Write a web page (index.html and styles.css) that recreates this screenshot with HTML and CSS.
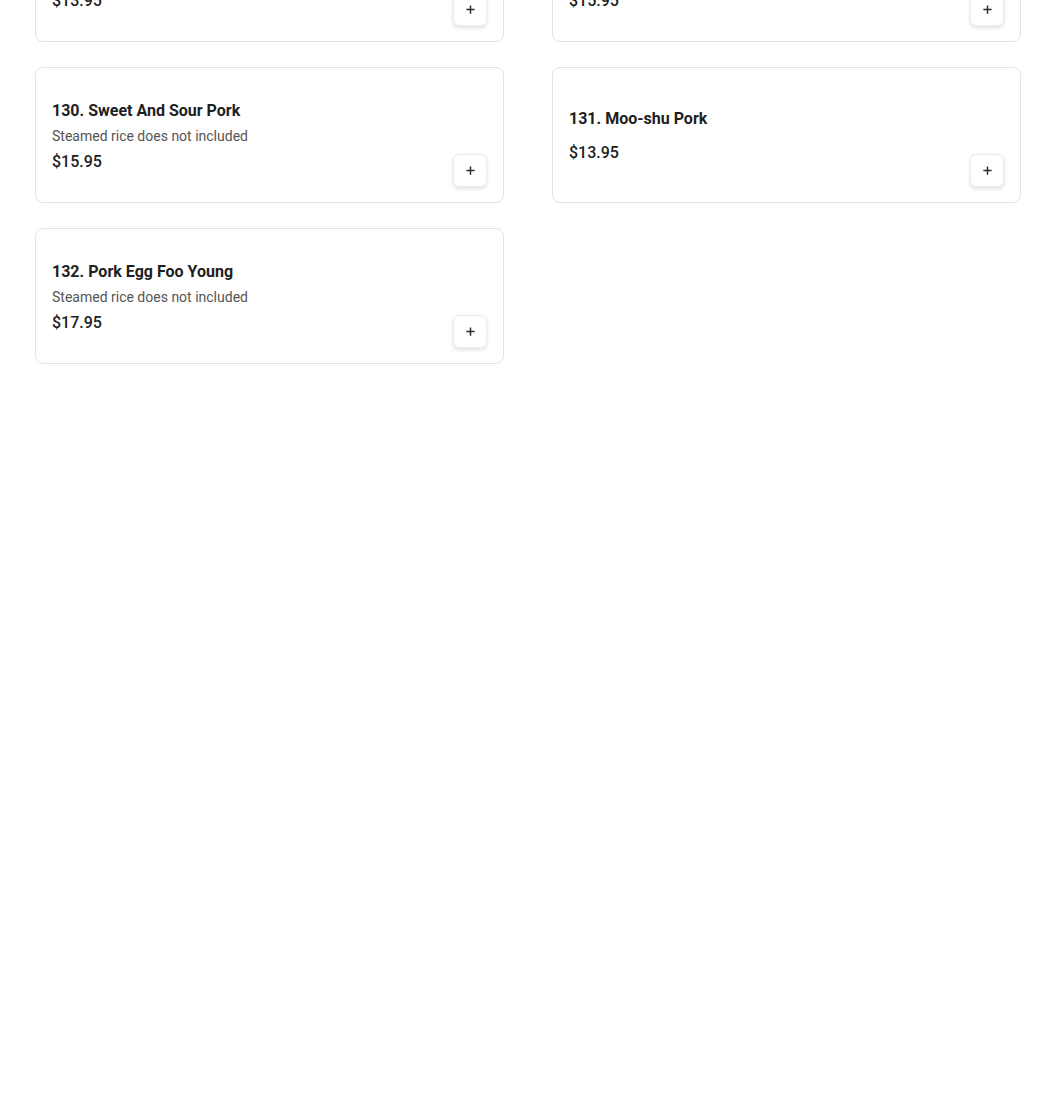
FILE: index.html
```html
<!DOCTYPE html>
<html lang="en">
<head>
<meta charset="utf-8">
<title>Menu</title>
<link rel="stylesheet" href="styles.css">
</head>
<body>
<main class="menu">
  <div class="grid">
    <article class="card">
      <div class="info">
        <h3 class="title">128. Roast Pork With Broccoli</h3>
        <p class="desc">Steamed rice does not included</p>
        <p class="price">$13.95</p>
      </div>
      <button class="add" aria-label="Add"><svg viewBox="0 0 12 12" width="12" height="12"><path d="M6 1.5v9M1.5 6h9" stroke="#2b2b2b" stroke-width="1.6" fill="none"/></svg></button>
    </article>
    <article class="card">
      <div class="info">
        <h3 class="title">129. Roast Pork Lo Mein</h3>
        <p class="desc">Steamed rice does not included</p>
        <p class="price">$15.95</p>
      </div>
      <button class="add" aria-label="Add"><svg viewBox="0 0 12 12" width="12" height="12"><path d="M6 1.5v9M1.5 6h9" stroke="#2b2b2b" stroke-width="1.6" fill="none"/></svg></button>
    </article>
    <article class="card">
      <div class="info">
        <h3 class="title">130. Sweet And Sour Pork</h3>
        <p class="desc">Steamed rice does not included</p>
        <p class="price">$15.95</p>
      </div>
      <button class="add" aria-label="Add"><svg viewBox="0 0 12 12" width="12" height="12"><path d="M6 1.5v9M1.5 6h9" stroke="#2b2b2b" stroke-width="1.6" fill="none"/></svg></button>
    </article>
    <article class="card">
      <div class="info">
        <h3 class="title">131. Moo-shu Pork</h3>
        <p class="price">$13.95</p>
      </div>
      <button class="add" aria-label="Add"><svg viewBox="0 0 12 12" width="12" height="12"><path d="M6 1.5v9M1.5 6h9" stroke="#2b2b2b" stroke-width="1.6" fill="none"/></svg></button>
    </article>
    <article class="card">
      <div class="info">
        <h3 class="title">132. Pork Egg Foo Young</h3>
        <p class="desc">Steamed rice does not included</p>
        <p class="price">$17.95</p>
      </div>
      <button class="add" aria-label="Add"><svg viewBox="0 0 12 12" width="12" height="12"><path d="M6 1.5v9M1.5 6h9" stroke="#2b2b2b" stroke-width="1.6" fill="none"/></svg></button>
    </article>
  </div>
</main>
</body>
</html>
```

FILE: styles.css
```css
* { box-sizing: border-box; }

html, body {
  margin: 0;
  padding: 0;
  background: #ffffff;
  font-family: Roboto, "Liberation Sans", Arial, sans-serif;
  color: #1f1f1f;
}

body { overflow: hidden; }

.menu {
  padding: 0 29px 0 35px;
  margin-top: -94.5px;
}

.grid {
  display: grid;
  grid-template-columns: 1fr 1fr;
  column-gap: 48px;
  row-gap: 24.5px;
}

.card {
  display: flex;
  align-items: center;
  height: 136.5px;
  padding: 16px 16px 15.5px;
  border: 1px solid #e3e3e3;
  border-radius: 8px;
  background: #fff;
}

.info {
  flex: 1;
  display: flex;
  flex-direction: column;
  padding-top: 2px;
}

.title {
  margin: 0;
  font-size: 16px;
  line-height: 24px;
  font-weight: 700;
  color: #1e1e1e;
}

.desc {
  margin: 3px 0 4px;
  font-size: 14px;
  line-height: 20px;
  font-weight: 400;
  color: #555555;
}

.price {
  margin: 0;
  font-size: 16px;
  line-height: 24px;
  font-weight: 500;
  color: #1e1e1e;
}

.title + .price { margin-top: 10px; }

.add {
  align-self: flex-end;
  width: 34px;
  height: 33px;
  padding: 0;
  display: flex;
  align-items: center;
  justify-content: center;
  background: #fff;
  border: 1px solid #ececec;
  border-radius: 6px;
  box-shadow: 0 2px 4px rgba(0, 0, 0, 0.12);
  cursor: pointer;
}

.add svg { display: block; width: 11px; height: 11px; }
```
